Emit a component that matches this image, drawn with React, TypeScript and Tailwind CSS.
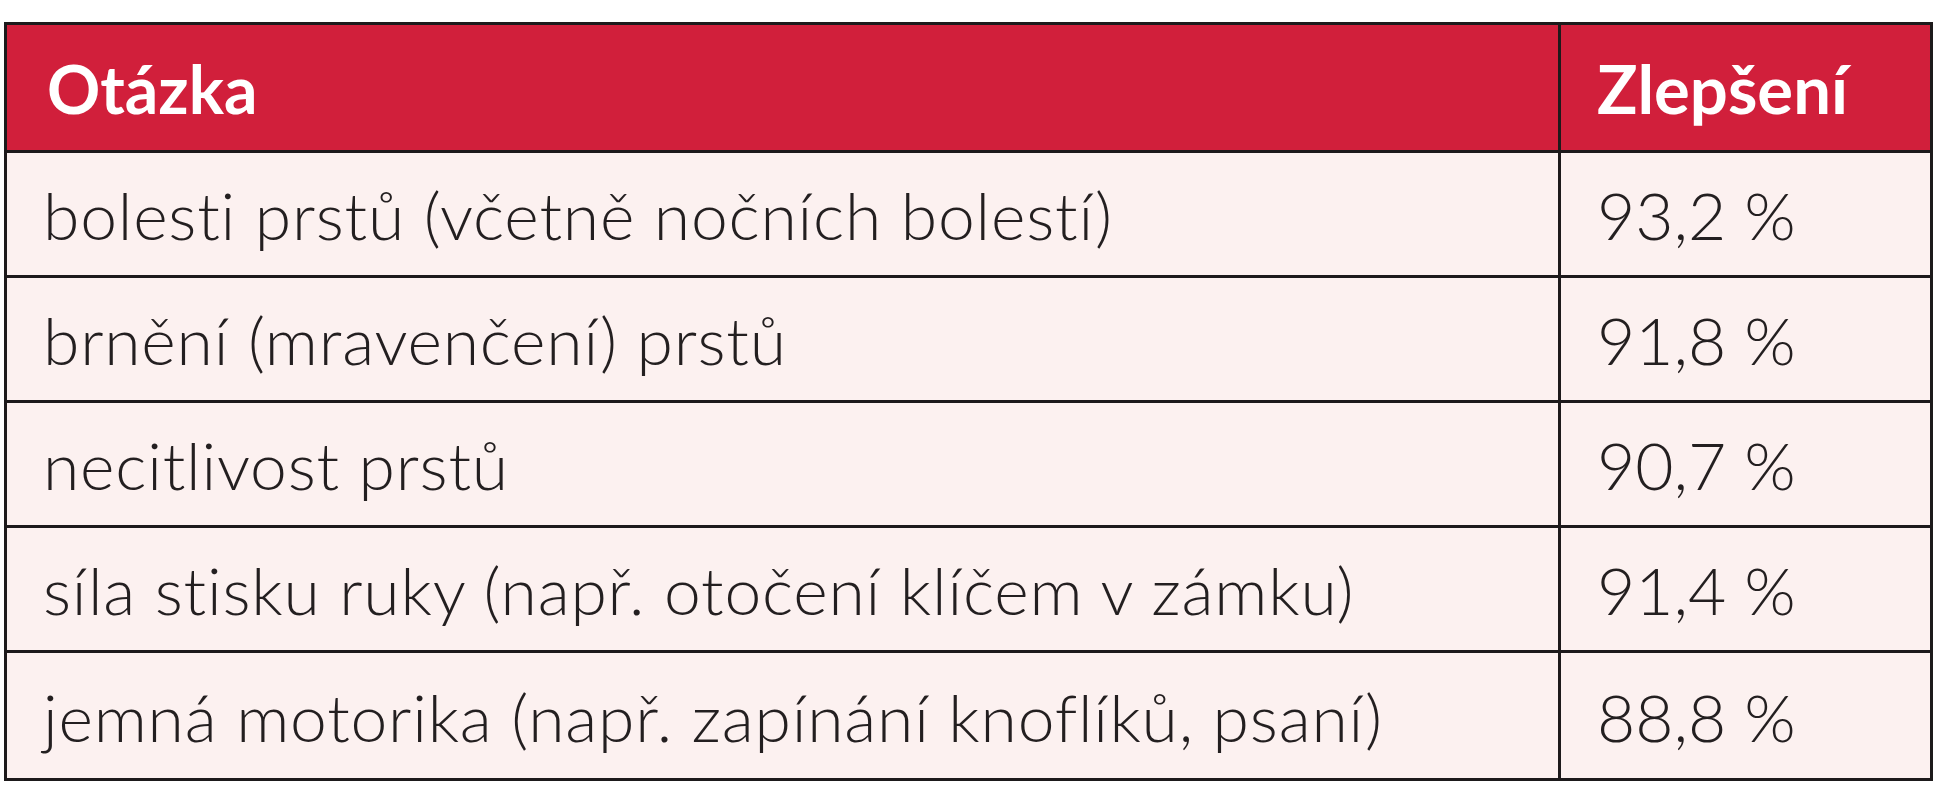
import React from 'react';

const rows: [string, string][] = [
  ['bolesti prstů (včetně nočních bolestí)', '93,2 %'],
  ['brnění (mravenčení) prstů', '91,8 %'],
  ['necitlivost prstů', '90,7 %'],
  ['síla stisku ruky (např. otočení klíčem v zámku)', '91,4 %'],
  ['jemná motorika (např. zapínání knoflíků, psaní)', '88,8 %'],
];

export default function App() {
  return (
    <div className="w-[1947px] h-[800px] bg-white pl-[4px] pt-[22px]" style={{ fontFamily: 'Lato, "Open Sans", sans-serif' }}>
      <div className="w-[1929px] border-[3px] border-[#1d1a1b] grid grid-cols-[1554px_1fr]">
        <div className="h-[128px] bg-[#d11f3b] border-b-[3px] border-r-[3px] border-[#1d1a1b] flex items-center pl-[40px] pt-[2px]">
          <span className="text-white font-bold text-[66px] leading-none">Otázka</span>
        </div>
        <div className="h-[128px] bg-[#d11f3b] border-b-[3px] border-[#1d1a1b] flex items-center pl-[36px] pt-[2px]">
          <span className="text-white font-bold text-[67px] leading-none">Zlepšení</span>
        </div>
        {rows.map(([q, v], i) => (
          <React.Fragment key={q}>
            <div className={`h-[125px] bg-[#fcf1f0] border-r-[3px] border-[#1d1a1b] flex items-center pl-[36px] pt-[2px] ${i < rows.length - 1 ? 'border-b-[3px]' : ''}`}>
              <span className="text-[#231f20] font-light text-[66px] tracking-[0.012em] leading-none">{q}</span>
            </div>
            <div className={`h-[125px] bg-[#fcf1f0] border-[#1d1a1b] flex items-center pl-[36px] pt-[2px] ${i < rows.length - 1 ? 'border-b-[3px]' : ''}`}>
              <span className="text-[#231f20] font-light text-[66px] leading-none">{v}</span>
            </div>
          </React.Fragment>
        ))}
      </div>
    </div>
  );
}
